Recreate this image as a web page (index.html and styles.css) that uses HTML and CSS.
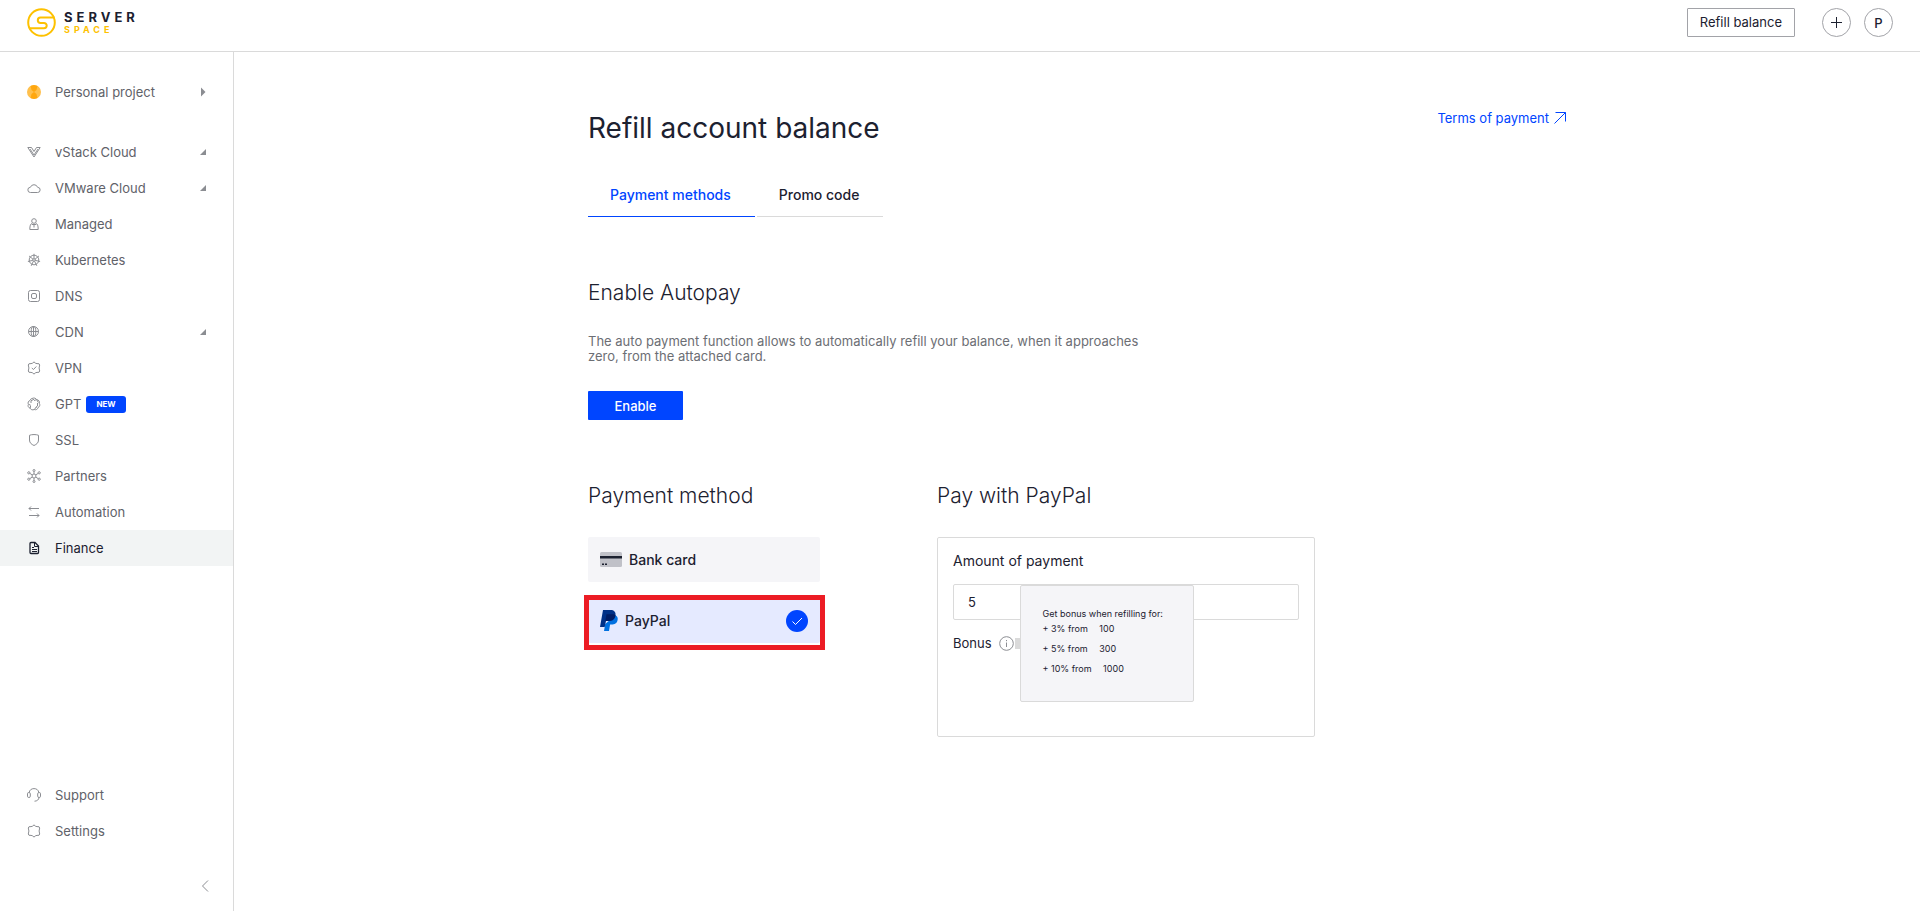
FILE: index.html
```html
<!DOCTYPE html>
<html lang="en">
    <head>
        <meta charset="utf-8">
        <title>Refill account balance</title>
        <link rel="stylesheet" href="styles.css">
    </head>

    <body>
        <header class="header">
            <a class="logo" href="#">
                <svg width="30" height="30" viewBox="0 0 30 30" fill="none" stroke="#fdc100" stroke-width="2">
                    <circle cx="14.500" cy="14.500" r="13.300"/>
                    <path d="M27.500 9.500H13.500a2.700 2.700 0 0 0 0 5.400h3.500a2.700 2.700 0 0 1 0 5.400H2.500"/>
                </svg>
                <span class="logo-text">
                    <span class="logo-top">SERVER</span>
                    <span class="logo-bottom">SPACE</span>
                </span>
            </a>
            <div class="header-actions">
                <button class="refill">Refill balance</button>
                <button class="round" aria-label="Add">
                    <svg width="11" height="11" viewBox="0 0 11 11" stroke="#1c2130"><path d="M5.500 0v11M0 5.500h11"/></svg>
                </button>
                <button class="round">P</button>
            </div>
        </header>

        <div class="layout">
            <nav class="sidebar">
                <a class="item project" href="#">
                    <svg class="icon" viewBox="0 0 14 14"><circle cx="7" cy="7" r="7" fill="#ffc04d"/><path d="M3.500 1 7 0l3.500 1L9.500 5 7 7 4.500 5zM3.500 13 7 14l3.500-1-1-4L7 7 4.500 9z" fill="#ffa70f"/></svg>
                    Personal project
                    <svg class="arrow" width="6" height="10" viewBox="0 0 6 10"><path d="M1 0.500 5.500 5 1 9.500z" fill="#8b8d92"/></svg>
                </a>
                <a class="item" href="#">
                    <svg class="icon" viewBox="0 0 14 14"><path d="M.8 2.500h3.700L7 6.500l2.500-4h3.700L7 12zM3 4 7 10l4-6"/></svg>
                    vStack Cloud
                    <svg class="arrow" width="6" height="6" viewBox="0 0 6 6"><path d="M6 0v6H0z" fill="#8b8d92"/></svg>
                </a>
                <a class="item" href="#">
                    <svg class="icon" viewBox="0 0 14 14"><path d="M3.500 11.500a2.600 2.600 0 0 1-.1-5.200A3.800 3.800 0 0 1 10.600 6.300a2.600 2.600 0 0 1-.1 5.200z"/></svg>
                    VMware Cloud
                    <svg class="arrow" width="6" height="6" viewBox="0 0 6 6"><path d="M6 0v6H0z" fill="#8b8d92"/></svg>
                </a>
                <a class="item" href="#">
                    <svg class="icon" viewBox="0 0 14 14"><circle cx="7" cy="4" r="2.300"/><path d="M5.300 6.200C3.500 7 2.800 8.500 2.800 12.500h8.400c0-4-.7-5.500-2.500-6.300M5 7.500h4M7 7.500v3"/></svg>
                    Managed
                </a>
                <a class="item" href="#">
                    <svg class="icon" viewBox="0 0 14 14"><circle cx="7" cy="7" r="4.800"/><circle cx="7" cy="7" r="1.300"/><path d="M7 .8v4.900M2.100 3 6 6.200M11.900 3 8 6.200M.9 8.500l4.800-1.100M13.100 8.500l-4.800-1.100M4.200 12.800l2.200-4.600M9.800 12.800 7.600 8.200"/></svg>
                    Kubernetes
                </a>
                <a class="item" href="#">
                    <svg class="icon" viewBox="0 0 14 14"><rect x="1.500" y="1.500" width="11" height="11" rx="2"/><rect x="4.500" y="4.500" width="5" height="5" rx="1.500"/></svg>
                    DNS
                </a>
                <a class="item" href="#">
                    <svg class="icon" viewBox="0 0 14 14"><circle cx="6.500" cy="6.500" r="5"/><ellipse cx="6.500" cy="6.500" rx="2.300" ry="5"/><path d="M1.500 6.500h10M6.500 1.500v10"/></svg>
                    CDN
                    <svg class="arrow" width="6" height="6" viewBox="0 0 6 6"><path d="M6 0v6H0z" fill="#8b8d92"/></svg>
                </a>
                <a class="item" href="#">
                    <svg class="icon" viewBox="0 0 14 14"><path d="M7 .8Q8.300 2.800 10 2.600 12.700 2.200 12.700 4 11.500 7 12.700 10 12.700 11.800 10 11.400 8.300 11.200 7 13.200 5.700 11.200 4 11.400 1.300 11.800 1.300 10 2.500 7 1.300 4 1.300 2.200 4 2.600 5.700 2.800 7 .8z" stroke-linejoin="round"/><path d="m4.800 7 1.700 1.500L9.300 5.500"/></svg>
                    VPN
                </a>
                <a class="item" href="#">
                    <svg class="icon" viewBox="0 0 14 14"><path d="M5 1.500c2-1 4-.3 4.600 1.100 2 .2 3.300 1.800 2.700 3.700 1 1.500.5 3.400-1.200 4.200-.3 1.800-2.200 2.700-3.900 2-1.600.9-3.500.1-4.200-1.400C1.300 10.600.6 8.900 1.400 7.400.6 5.700 1.300 4.100 2.900 3.500 3.200 2.500 4 1.700 5 1.500zM4 6V3.800L7 2.200M7 3.500l2.600-.9 1.700 2.900M10.500 6v3l-2 1.500M9.800 10l-2.600 2.300M3.500 8.500v2.300M3.500 8 1.800 7.500"/></svg>
                    GPT
                    <span class="new">NEW</span>
                </a>
                <a class="item" href="#">
                    <svg class="icon" viewBox="0 0 14 14"><path d="M2.500 2.300C4.500 1.300 9.500 1.300 11.500 2.300V7c0 3-2 4.300-4.500 5.500C4.500 11.300 2.500 10 2.500 7z"/></svg>
                    SSL
                </a>
                <a class="item" href="#">
                    <svg class="icon" viewBox="0 0 14 14"><circle cx="7" cy="7" r="2"/><circle cx="7" cy="1.500" r="1"/><circle cx="7" cy="12.500" r="1"/><circle cx="1.800" cy="3.800" r="1.100"/><circle cx="12.200" cy="3.800" r="1.100"/><circle cx="1.800" cy="10.200" r="1.100"/><circle cx="12.200" cy="10.200" r="1.100"/><path d="M7 2.500V5M7 9v2.500M3 4.500l2.300 1.400M11 4.500 8.700 5.900M3 9.500l2.300-1.400M11 9.500 8.700 8.100"/></svg>
                    Partners
                </a>
                <a class="item" href="#">
                    <svg class="icon" viewBox="0 0 14 14"><path d="M12 3.500H2M4 1.500l-2 2 2 2M2 10.500h10M10 8.500l2 2-2 2"/></svg>
                    Automation
                </a>
                <a class="item active" href="#">
                    <svg class="icon" viewBox="0 0 14 14"><path d="M4 1.500h4l3.500 3.500v6.500q0 1-1 1h-6.500q-1 0-1-1V2.500q0-1 1-1z" stroke-width="1.300"/><path d="M7.500 1.500v4h4M5 6.500h2M5 8.500h5M5 10.500h5"/></svg>
                    Finance
                </a>

                <div class="bottom">
                    <a class="item" href="#">
                        <svg class="icon" viewBox="0 0 14 14"><path d="M2.200 4.500C2.500 2 4.500.6 7 .6s4.500 1.400 4.800 3.900M12 9.500c0 2-2 3.700-4.500 3.700"/><rect x=".5" y="4.500" width="2.800" height="5" rx="1.300"/><rect x="10.700" y="4.500" width="2.800" height="5" rx="1.300"/></svg>
                        Support
                    </a>
                    <a class="item" href="#">
                        <svg class="icon" viewBox="0 0 14 14"><path d="M7 .8Q8.300 2.800 10 2.600 12.700 2.200 12.700 4 11.500 7 12.700 10 12.700 11.800 10 11.400 8.300 11.200 7 13.200 5.700 11.200 4 11.400 1.300 11.800 1.300 10 2.500 7 1.300 4 1.300 2.200 4 2.600 5.700 2.800 7 .8z" stroke-linejoin="round"/></svg>
                        Settings
                    </a>
                    <button class="collapse" aria-label="Collapse menu">
                        <svg width="8" height="12" viewBox="0 0 8 12" fill="none" stroke="#8b8d92"><path d="M7 .5 1.500 6 7 11.500"/></svg>
                    </button>
                </div>
            </nav>

            <main class="main">
                <div class="content">
                    <div class="top">
                        <h1>Refill account balance</h1>
                        <a class="terms" href="#">Terms of payment
                            <svg width="12" height="12" viewBox="0 0 12 12" fill="none" stroke="#0045ff"><path d="M.5 11.500l11-11M1.500.5h10v9"/></svg>
                        </a>
                    </div>

                    <div class="tabs">
                        <button class="tab selected">Payment methods</button>
                        <button class="tab">Promo code</button>
                    </div>

                    <section class="autopay">
                        <h2>Enable Autopay</h2>
                        <p>The auto payment function allows to automatically refill your balance, when it approaches zero, from the attached card.</p>
                        <button class="enable">Enable</button>
                    </section>

                    <div class="columns">
                        <section class="methods">
                            <h2>Payment method</h2>
                            <label class="method">
                                <input type="radio" name="method">
                                <svg width="22" height="15" viewBox="0 0 22 15"><rect width="22" height="15" rx="1.500" fill="#c0c1c8"/><path d="M0 4h22v2.500H0z" fill="#1c2130"/><path d="M2 11.500h2v1.500H2zM5 11.500h2v1.500H5z" fill="#1c2130"/></svg>
                                Bank card
                            </label>
                            <label class="method chosen">
                                <input type="radio" name="method" checked>
                                <svg width="18" height="21" viewBox="0 0 18 21"><path d="M15.500 5.300C17.500 6.300 18 8 17.600 10c-.7 3.400-3 4.600-6 4.600h-1.500L9 21H4l1.200-7z" fill="#0070e0"/><path d="M3 0h7.500C14 0 16 2 15.500 5.300 14.900 9 12.500 11 9 11H6l-1.300 6H0z" fill="#003087"/><path d="M6.500 4.300h6c1.300 0 2.200.3 3 1C14.900 9 12.500 11 9 11H5.300z" fill="#001c64"/></svg>
                                PayPal
                                <svg class="check" width="22" height="22" viewBox="0 0 22 22" fill="none"><circle cx="11" cy="11" r="11" fill="#0045ff"/><path d="m6.500 11.500 3 3 6.500-6.500" stroke="#fff"/></svg>
                            </label>
                        </section>

                        <section class="pay">
                            <h2>Pay with PayPal</h2>
                            <div class="form">
                                <label for="amount">Amount of payment</label>
                                <input type="text" id="amount" value="5">
                                <div class="bonus">
                                    Bonus
                                    <span class="info">
                                        <svg width="15" height="15" viewBox="0 0 15 15" fill="none" stroke="#8b8d92"><circle cx="7.500" cy="7.500" r="6.800"/><path d="M7.500 6.500V11M7.500 4v1.200"/></svg>
                                        <div class="tooltip">
                                            <p>Get bonus when refilling for:</p>
                                            <ul>
                                                <li>+ 3% from <span>100</span></li>
                                                <li>+ 5% from <span>300</span></li>
                                                <li>+ 10% from <span>1000</span></li>
                                            </ul>
                                        </div>
                                    </span>
                                </div>
                            </div>
                        </section>
                    </div>
                </div>
            </main>
        </div>
    </body>
</html>
```
FILE: styles.css
```css
* {
    box-sizing: border-box;
}
body {
    margin: 0;
    min-height: 100vh;
    display: flex;
    flex-direction: column;
    font-family: Inter, "Liberation Sans", sans-serif;
    font-size: 13px;
    color: #1c2130;
    background-color: white;
}
a {
    text-decoration: none;
    color: inherit;
}
button {
    font-family: inherit;
    font-size: 13px;
    color: inherit;
    background: none;
    border: none;
    padding: 0;
    cursor: pointer;
}
h1, h2, p, ul {
    margin: 0;
    padding: 0;
    font-weight: normal;
}

/* header */
.header {
    display: flex;
    justify-content: space-between;
    align-items: flex-start;
    height: 52px;
    padding: 8px 27px;
    border-bottom: 1px solid #dadada;
}
.logo {
    display: flex;
    gap: 7px;
}
.logo-text {
    display: flex;
    flex-direction: column;
    padding-top: 2px;
    line-height: 14px;
    font-weight: bold;
}
.logo-top {
    font-size: 13px;
    letter-spacing: 4px;
}
.logo-bottom {
    font-size: 9px;
    letter-spacing: 4px;
    line-height: 12px;
    color: #fdc100;
}
.header-actions {
    display: flex;
}
.refill {
    height: 29px;
    padding: 0 12px 2px;
    border: 1px solid #a2a3a8;
    border-radius: 1px;
    margin-right: 14px;
}
.round {
    display: flex;
    align-items: center;
    justify-content: center;
    width: 29px;
    height: 29px;
    margin-left: 13px;
    border: 1px solid #a2a3a8;
    border-radius: 50%;
    font-weight: 500;
}

/* sidebar */
.layout {
    display: flex;
    flex: 1;
}
.sidebar {
    display: flex;
    flex-direction: column;
    width: 234px;
    padding-top: 22px;
    border-right: 1px solid #dadada;
}
.item {
    display: flex;
    align-items: center;
    height: 36px;
    padding: 0 27px;
    color: #5f6269;
}
.project {
    margin-bottom: 24px;
}
.icon {
    width: 14px;
    height: 14px;
    margin-right: 14px;
    fill: none;
    stroke: #8b8d92;
}
.project .icon {
    stroke: none;
}
.arrow {
    margin-left: auto;
}
.active {
    background-color: #f2f4f4;
    color: #1c2130;
}
.active .icon {
    stroke: #1c2130;
}
.new {
    margin-left: 5px;
    padding: 0 10px;
    border-radius: 3px;
    background-color: #0045ff;
    color: white;
    font-size: 8px;
    font-weight: bold;
    line-height: 17px;
}
.bottom {
    display: flex;
    flex-direction: column;
    margin-top: auto;
    padding-bottom: 16px;
}
.collapse {
    align-self: flex-end;
    margin: 30px 24px 0;
}

/* content */
.main {
    flex: 1;
    padding: 60px 20px;
}
.content {
    max-width: 978px;
    margin: 0 auto;
}
.top {
    display: flex;
    justify-content: space-between;
    align-items: flex-start;
}
h1 {
    font-size: 28px;
    line-height: 32px;
}
h2 {
    font-size: 21px;
    line-height: 26px;
    font-weight: 300;
}
.terms {
    display: flex;
    align-items: center;
    gap: 5px;
    color: #0045ff;
    line-height: 12px;
}
.tabs {
    display: flex;
    gap: 2px;
    margin-top: 30px;
}
.tab {
    height: 43px;
    padding: 0 24px 2px 22px;
    border-bottom: 1px solid #dadada;
    font-size: 14px;
    font-weight: 500;
}
.selected {
    color: #0045ff;
    border-color: #0045ff;
}
.autopay {
    margin-top: 63px;
}
.autopay p {
    max-width: 570px;
    margin: 28px 0 27px;
    line-height: 15px;
    color: #6c6e74;
}
.enable {
    width: 95px;
    height: 29px;
    border-radius: 1px;
    background-color: #0045ff;
    color: white;
    font-weight: 500;
}
.columns {
    display: flex;
    gap: 117px;
    margin-top: 63px;
}
.methods {
    width: 232px;
}
.method {
    position: relative;
    display: flex;
    align-items: center;
    gap: 7px;
    height: 45px;
    margin-bottom: 16px;
    padding: 0 12px;
    border-radius: 2px;
    background-color: #f5f5f8;
    font-size: 14px;
    font-weight: 500;
}
.method input {
    position: absolute;
    opacity: 0;
}
.chosen {
    background-color: #e5eaff;
}
.chosen::after {
    content: "";
    position: absolute;
    top: -3px;
    right: -5px;
    bottom: -7px;
    left: -4px;
    border: 5px solid #ec1c24;
}
.check {
    margin-left: auto;
}
.columns h2 {
    margin-bottom: 28px;
}
.pay {
    width: 378px;
}
.form {
    height: 200px;
    padding: 14px 15px;
    border: 1px solid #dadada;
    border-radius: 2px;
}
.form label {
    display: block;
    font-size: 14px;
    line-height: 18px;
}
.form input {
    width: 100%;
    height: 36px;
    margin-top: 14px;
    padding: 0 14px;
    border: 1px solid #dadada;
    border-radius: 2px;
    font-family: inherit;
    font-size: 13px;
    color: inherit;
}
.bonus {
    display: flex;
    align-items: center;
    gap: 7px;
    margin-top: 15px;
}
.info {
    position: relative;
    display: flex;
}
.tooltip {
    position: absolute;
    top: -51px;
    left: 21px;
    width: 174px;
    height: 117px;
    padding: 21px 22px;
    border: 1px solid #dadada;
    border-radius: 2px;
    background-color: #f5f5f8;
    font-size: 9px;
    font-weight: 500;
    white-space: nowrap;
}
.tooltip::before {
    content: "";
    position: absolute;
    top: 52px;
    left: -6px;
    width: 5px;
    height: 11px;
    background-color: #dadada;
}
.tooltip p {
    line-height: 14px;
}
.tooltip ul {
    list-style: none;
}
.tooltip li {
    line-height: 16px;
    margin-bottom: 4px;
}
.tooltip span {
    margin-left: 9px;
}
```
